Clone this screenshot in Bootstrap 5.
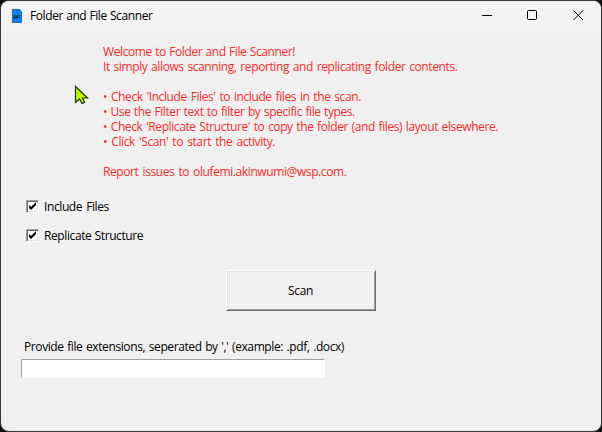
<!DOCTYPE html>
<html lang="en">
<head>
<meta charset="utf-8">
<meta name="viewport" content="width=device-width, initial-scale=1">
<title>Folder and File Scanner</title>
<link href="https://cdn.jsdelivr.net/npm/bootstrap@5.3.0/dist/css/bootstrap.min.css" rel="stylesheet">
<style>
body{background:#111;font:12px/15px "Open Sans","Noto Sans",sans-serif;color:#000;overflow:hidden}
.app-window{width:602px;height:432px;background:#f0f0f0;border:1px solid #39363a;border-radius:9px;letter-spacing:-.4px}
.title-bar{height:30px;background:#f3f3f3;padding-left:10px}
.title-text{margin-left:7px;word-spacing:.4px;padding-bottom:1px}
.win-btn{width:46px;height:30px;padding:0;border:0;background:none}
.intro{margin:13px 0 0 102px;color:#f52d28;white-space:nowrap}
.intro div{height:15px}
.t1{word-spacing:.6px}
.t2{word-spacing:1px}
.t3{word-spacing:1.1px}
.t4{word-spacing:.65px}
.t5{word-spacing:.9px}
.t6{word-spacing:1.4px}
.t7{word-spacing:1.3px}
.c1{word-spacing:1.3px}
.c2{word-spacing:.5px}
.pointer{left:73px;top:84px}
.checks{margin:20px 0 0 25px;gap:14px}
.check-line{height:15px;gap:5px}
.tick-box{width:13px;height:13px;background:#fff;border:1px solid;border-color:#a0a0a0 #fff #fff #a0a0a0;box-shadow:inset 1px 1px #696969,inset -1px -1px #e3e3e3}
.tick-box svg{display:block}
.scan-btn{width:150px;height:41px;margin:27px 0 0 225px;background:#f0f0f0;border:1px solid;border-color:#fff #696969 #696969 #fff;box-shadow:inset 1px 1px #e3e3e3,inset -1px -1px #a0a0a0;font:inherit;color:#000;padding:0 1px 0 0;letter-spacing:-.3px}
.ext-label{margin:28px 0 0 23px;white-space:nowrap;height:15px;word-spacing:.85px}
.ext-input{width:304px;height:19px;margin:5px 0 0 20px;border:1px solid;border-color:#a0a0a0 #fff #fff #a0a0a0;background:#fff;padding:0 2px;outline:0}
</style>
<script src="https://cdn.jsdelivr.net/npm/bootstrap@5.3.0/dist/js/bootstrap.bundle.min.js"></script>
</head>
<body>
<div class="app-window position-relative d-flex flex-column overflow-hidden">
  <header class="title-bar d-flex align-items-center flex-shrink-0">
    <svg width="12" height="14" viewBox="0 0 12 14"><path d="M1.500.5h6.600l2.400 2.400v10.600h-9z" fill="#0a84ff" stroke="#1565ad"/><path d="M8 .5 10.500 3" stroke="#555"/><path d="M3 6h6v3H7.500L6 10H2.500V6.500z" fill="#074580"/></svg>
    <span class="title-text">Folder and File Scanner</span>
    <div class="d-flex ms-auto">
      <button class="win-btn" aria-label="Minimize"><svg class="d-block" width="46" height="30"><path d="M19 14.500h10" stroke="#000"/></svg></button>
      <button class="win-btn" aria-label="Maximize"><svg class="d-block" width="46" height="30"><rect x="18.500" y="9.500" width="9" height="9" rx="1" fill="none" stroke="#000"/></svg></button>
      <button class="win-btn" aria-label="Close"><svg class="d-block" width="46" height="30"><path d="m18.500 9.500 9.500 9.500m0-9.500-9.500 9.500" stroke="#000" fill="none"/></svg></button>
    </div>
  </header>
  <main class="d-flex flex-column align-items-start">
    <div class="intro">
      <div class="t1">Welcome to Folder and File Scanner!</div>
      <div class="t2">It simply allows scanning, reporting and replicating folder contents.</div>
      <div></div>
      <div class="t3">• Check 'Include Files' to include files in the scan.</div>
      <div class="t4">• Use the Filter text to filter by specific file types.</div>
      <div class="t5">• Check 'Replicate Structure' to copy the folder (and files) layout elsewhere.</div>
      <div class="t6">• Click 'Scan' to start the activity.</div>
      <div></div>
      <div class="t7">Report issues to olufemi.akinwumi@wsp.com.</div>
    </div>
    <div class="checks d-flex flex-column">
      <div class="check-line c1 d-flex align-items-center"><span class="tick-box"><svg width="11" height="11"><path d="M2 4v3l2 2 5-5V1L4 6z" fill="#000"/></svg></span><span>Include Files</span></div>
      <div class="check-line c2 d-flex align-items-center"><span class="tick-box"><svg width="11" height="11"><path d="M2 4v3l2 2 5-5V1L4 6z" fill="#000"/></svg></span><span>Replicate Structure</span></div>
    </div>
    <button class="scan-btn">Scan</button>
    <label class="ext-label" for="extensions">Provide file extensions, seperated by ',' (example: .pdf, .docx)</label>
    <input class="ext-input" id="extensions" type="text">
  </main>
  <svg class="pointer position-absolute" width="15" height="20"><path d="M1.500 1.500v16l4-3.500L8 18.500l2.500-1-2-4.500h5z" fill="#b8f800" stroke="#26300a" stroke-width="1.200"/></svg>
</div>
</body>
</html>
